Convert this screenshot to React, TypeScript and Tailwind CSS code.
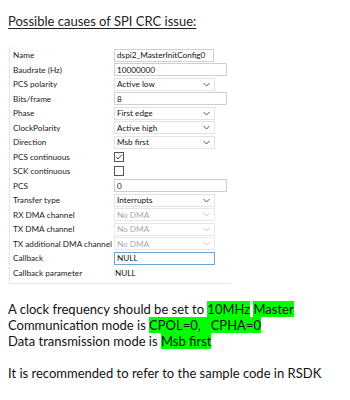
import React from 'react';

type Row = {
  label: string;
  kind: 'input' | 'wide' | 'select' | 'check' | 'text';
  value?: string;
  checked?: boolean;
  disabled?: boolean;
  focus?: boolean;
};

const rows: Row[] = [
  { label: 'Name', kind: 'input', value: 'dspi2_MasterInitConfig0' },
  { label: 'Baudrate (Hz)', kind: 'wide', value: '10000000' },
  { label: 'PCS polarity', kind: 'select', value: 'Active low' },
  { label: 'Bits/frame', kind: 'wide', value: '8' },
  { label: 'Phase', kind: 'select', value: 'First edge' },
  { label: 'ClockPolarity', kind: 'select', value: 'Active high' },
  { label: 'Direction', kind: 'select', value: 'Msb first' },
  { label: 'PCS continuous', kind: 'check', checked: true },
  { label: 'SCK continuous', kind: 'check', checked: false },
  { label: 'PCS', kind: 'wide', value: '0' },
  { label: 'Transfer type', kind: 'select', value: 'Interrupts' },
  { label: 'RX DMA channel', kind: 'select', value: 'No DMA', disabled: true },
  { label: 'TX DMA channel', kind: 'select', value: 'No DMA', disabled: true },
  { label: 'TX additional DMA channel', kind: 'select', value: 'No DMA', disabled: true },
  { label: 'Callback', kind: 'input', value: 'NULL', focus: true },
  { label: 'Callback parameter', kind: 'text', value: 'NULL' },
];

function Chevron({ light }: { light?: boolean }) {
  return (
    <svg width="7" height="5" viewBox="0 0 7 5" className="ml-auto mr-1 shrink-0">
      <path d="M0.5 1 L3.5 4 L6.5 1" fill="none" stroke={light ? '#c4c4c4' : '#555'} strokeWidth="1" />
    </svg>
  );
}

function Field({ row }: { row: Row }) {
  if (row.kind === 'check') {
    return (
      <div className="w-[10px] h-[10px] border border-[#555] bg-white flex items-center justify-center">
        {row.checked && (
          <svg width="8" height="8" viewBox="0 0 8 8">
            <path d="M1 4 L3 6 L7 1.5" fill="none" stroke="#333" strokeWidth="0.9" />
          </svg>
        )}
      </div>
    );
  }
  if (row.kind === 'text') {
    return <div className="pl-[1px] text-[#111]">{row.value}</div>;
  }
  if (row.kind === 'select') {
    return (
      <div
        className={`w-[101px] h-[13px] flex items-center pl-[2px] border ${
          row.disabled ? 'border-[#e8e8e8] text-[#a8a8a8]' : 'border-[#e3e3e3] text-[#111]'
        }`}
      >
        {row.value}
        <Chevron light={row.disabled} />
      </div>
    );
  }
  return (
    <div
      className={`h-[13px] flex items-center pl-[2px] border text-[#111] whitespace-nowrap overflow-hidden ${
        row.kind === 'wide' ? 'w-[113px] border-[#cfcfcf]' : row.focus ? 'w-[101px] border-[#6aa6d8]' : 'w-[100px] border-[#cfcfcf]'
      }`}
    >
      {row.value}
    </div>
  );
}

function Hl({ children }: { children: React.ReactNode }) {
  return <span className="bg-[#00ff00]">{children}</span>;
}

export default function App() {
  return (
    <div className="w-[350px] h-[400px] bg-white overflow-hidden">
      <div className="pt-[12px] pl-[8px] text-[13px] leading-[18px] text-[#222] underline underline-offset-2 font-['Lato',sans-serif]">
        Possible causes of SPI CRC issue:
      </div>

      <div className="ml-[9px] mt-[17px] w-[222px] border-l border-b border-[#e6e6e6] pt-[1px] pb-[3px] font-['Lato',sans-serif] text-[8.2px] text-[#222]">
        {rows.map((r) => (
          <div key={r.label} className="flex items-center h-[14.5px]">
            <div className="w-[104px] pl-[3px] whitespace-nowrap">{r.label}</div>
            <Field row={r} />
          </div>
        ))}
      </div>

      <div className="mt-[17px] pl-[8px] text-[13px] leading-[16px] text-[#111] font-['Lato',sans-serif]">
        <div>
          A clock frequency should be set to <Hl>10MHz</Hl> <Hl>Master</Hl>
        </div>
        <div>
          Communication mode is <Hl>CPOL=0,&nbsp;&nbsp;&nbsp;CPHA=0</Hl>
        </div>
        <div>
          Data transmission mode is <Hl>Msb first</Hl>
        </div>
        <div className="h-[16px]" />
        <div>It is recommended to refer to the sample code in RSDK</div>
      </div>
    </div>
  );
}
